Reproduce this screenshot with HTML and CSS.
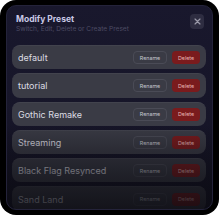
FILE: index.html
```html
<!DOCTYPE html>
<html>
<head>
  <title>Modify Preset</title>
  <link rel="stylesheet" href="styles.css">
</head>
<body>
  <div class="frame">
    <div class="panel">
      <div class="header">
        <div class="titles">
          <h1>Modify Preset</h1>
          <p>Switch, Edit, Delete or Create Preset</p>
        </div>
        <button class="close" aria-label="Close">
          <svg width="7" height="7" viewBox="0 0 10 10">
            <path d="M1.5 1.5 L8.5 8.5 M8.5 1.5 L1.5 8.5" stroke="#9a99a8" stroke-width="1.8" stroke-linecap="round"/>
          </svg>
        </button>
      </div>

      <div class="preset-list">
        <div class="preset"><span class="name">default</span><button class="rename">Rename</button><button class="delete">Delete</button></div>
        <div class="preset"><span class="name">tutorial</span><button class="rename">Rename</button><button class="delete">Delete</button></div>
        <div class="preset"><span class="name">Gothic Remake</span><button class="rename">Rename</button><button class="delete">Delete</button></div>
        <div class="preset"><span class="name">Streaming</span><button class="rename">Rename</button><button class="delete">Delete</button></div>
        <div class="preset"><span class="name">Black Flag Resynced</span><button class="rename">Rename</button><button class="delete">Delete</button></div>
        <div class="preset"><span class="name">Sand Land</span><button class="rename">Rename</button><button class="delete">Delete</button></div>
      </div>

      <div class="fade"></div>
    </div>
  </div>
</body>
</html>
```

FILE: styles.css
```css
html, body {
  margin: 0;
  background: #ffffff;
}

body {
  width: 219px;
  height: 215px;
  overflow: hidden;
  font-family: Inter, 'Noto Sans', sans-serif;
}

.frame {
  height: 215px;
  box-sizing: border-box;
  padding: 5px 6px 5px 6px;
  background: #000000;
  border-radius: 16px;
}

.panel {
  position: relative;
  height: 100%;
  box-sizing: border-box;
  padding: 8px 6px 0 5px;
  background: linear-gradient(#19182d, #141324);
  border: 1px solid #24233a;
  border-radius: 10px;
  overflow: hidden;
}

.header {
  display: flex;
  justify-content: space-between;
  align-items: flex-start;
  height: 31px;
}

.titles {
  padding-left: 4px;
}

h1 {
  margin: 0;
  font-size: 8.5px;
  font-weight: 700;
  line-height: 11px;
  color: #c9c8e6;
}

.titles p {
  margin: 0;
  font-size: 6.6px;
  line-height: 9px;
  color: #4c4b63;
}

.close {
  width: 14px;
  height: 15px;
  margin: 0 2px 0 0;
  padding: 0;
  border: none;
  border-radius: 4px;
  background: #2e2d41;
  display: flex;
  align-items: center;
  justify-content: center;
}

.preset-list {
  display: flex;
  flex-direction: column;
  gap: 4px;
}

.preset {
  display: flex;
  align-items: center;
  height: 24.3px;
  padding: 0 6px 0 6px;
  background: #3a3b45;
  border-radius: 8px;
  border-top: 1px solid #42434d;
  box-sizing: border-box;
}

.name {
  flex: 1;
  font-size: 9px;
  color: #dcdce2;
}

.preset button {
  height: 13px;
  padding: 0;
  border-radius: 4px;
  font-family: Inter, 'Noto Sans', sans-serif;
  font-size: 5.3px;
}

.rename {
  width: 34px;
  margin-right: 5px;
  background: transparent;
  border: 1px solid #4a4b56;
  color: #c8c8d0;
}

.delete {
  width: 28px;
  background: #7a1b1d;
  border: none;
  color: #e9b7b7;
}

/* list fades out towards the bottom */
.fade {
  position: absolute;
  left: 0;
  right: 0;
  top: 118px;
  bottom: 0;
  background: linear-gradient(rgba(10, 10, 16, 0), rgba(10, 10, 16, 0.3) 30%, rgba(10, 10, 16, 0.55) 60%, rgba(10, 10, 16, 0.8));
  pointer-events: none;
}
```
